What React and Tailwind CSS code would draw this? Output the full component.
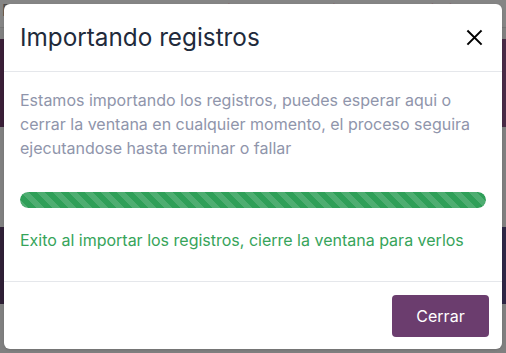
import React from "react";

const ImportModal = () => {
  return (
    <div className="absolute left-[4px] top-[4px] w-[498px] rounded-[6px] bg-white shadow-sm">
      <div className="flex h-[68px] items-center justify-between border-b border-[#e5e7eb] px-4">
        <h5 className="text-[24.3px] leading-[1.2] text-[#212a3b]">Importando registros</h5>
        <button className="mr-[2px] flex h-5 w-5 items-center justify-center text-black">
          <svg width="17" height="17" viewBox="0 0 16 16" fill="none" stroke="currentColor" strokeWidth="1.9" strokeLinecap="square">
            <path d="M2 2 L14 14 M14 2 L2 14" />
          </svg>
        </button>
      </div>

      <div className="px-4 pt-4 pb-4">
        <p className="text-[16px] leading-[24px] text-[#8f95ab]">
          Estamos importando los registros, puedes esperar aqui o cerrar la ventana en cualquier momento, el proceso seguira ejecutandose hasta terminar o fallar
        </p>
        <div className="mt-8 h-4 w-full overflow-hidden rounded-full bg-[#e9ecef]">
          <div className="h-full w-full rounded-full bg-[#2f9f58] bg-[linear-gradient(45deg,rgba(255,255,255,0.15)_25%,transparent_25%,transparent_50%,rgba(255,255,255,0.15)_50%,rgba(255,255,255,0.15)_75%,transparent_75%,transparent)] bg-[length:16px_16px]" />
        </div>
        <p className="mt-5 mb-[13px] text-[16px] leading-[24px] text-[#36a45a]">
          Exito al importar los registros, cierre la ventana para verlos
        </p>
      </div>

      <div className="flex justify-end border-t border-[#e5e7eb] px-[13px] pt-[13px] pb-3">
        <button className="h-[42px] w-[97px] rounded-[4px] bg-[#6b3d6e] text-[16px] text-white">
          Cerrar
        </button>
      </div>
    </div>
  );
};

export default function App() {
  return (
    <div
      className="relative h-[353px] w-[506px] overflow-hidden bg-[#808080]"
      style={{ fontFamily: "Inter, 'Noto Sans', sans-serif" }}
    >
      {/* dimmed page behind the modal */}
      <div className="flex h-[28px] items-start border-b border-[#767676] bg-[#858585] text-[16px] leading-[20px]">
        <span className="pl-[2px] text-[#4a4a4a]">P</span>
        <div className="ml-[180px] flex gap-[38px] text-[#7a1e2a]">
          <span>Studios</span>
          <span>Usuarios</span>
          <span>Rendimiento</span>
          <span>Rol</span>
        </div>
      </div>
      <div className="mt-[11px] flex h-[88px] justify-between">
        <div className="w-[10px] bg-[#3a1f37]" />
        <div className="w-[10px] bg-[#4a2b47]" />
      </div>
      <div className="mt-[100px] flex h-[77px] justify-between">
        <div className="w-[10px] bg-[#2f2036]" />
        <div className="w-[10px] bg-[#2f2746]" />
      </div>

      <ImportModal />
    </div>
  );
}
